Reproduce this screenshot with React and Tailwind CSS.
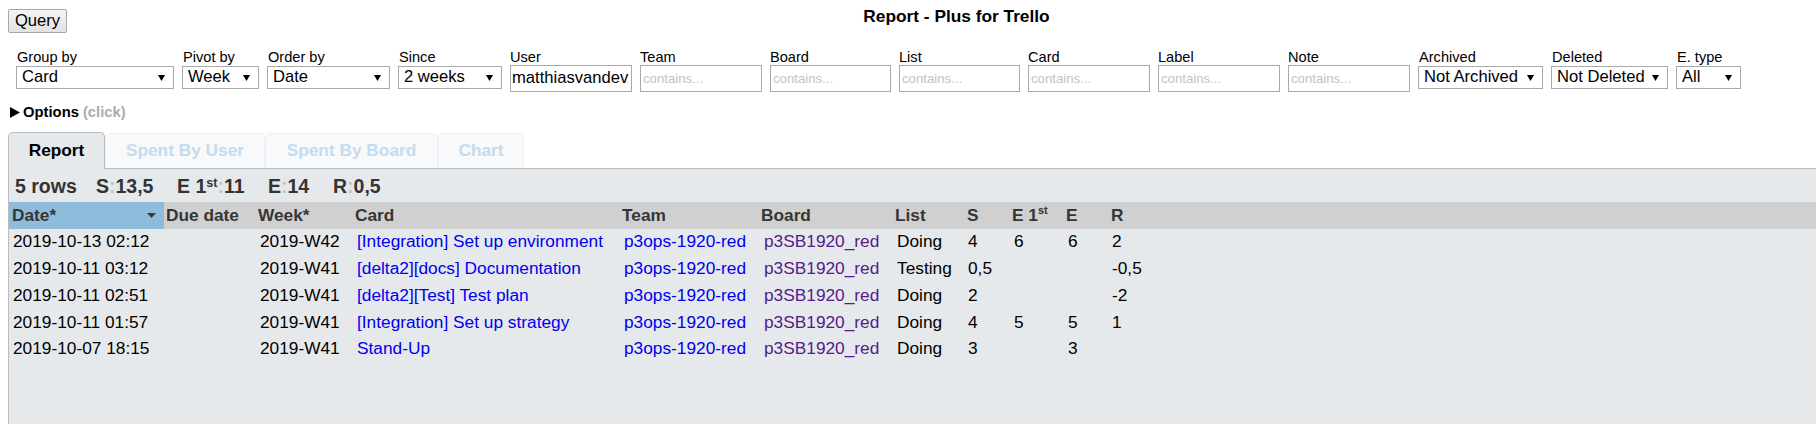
import React from "react";

const rows = [
  ["2019-10-13 02:12", "", "2019-W42", "[Integration] Set up environment", "p3ops-1920-red", "p3SB1920_red", "Doing", "4", "6", "6", "2"],
  ["2019-10-11 03:12", "", "2019-W41", "[delta2][docs] Documentation", "p3ops-1920-red", "p3SB1920_red", "Testing", "0,5", "", "", "-0,5"],
  ["2019-10-11 02:51", "", "2019-W41", "[delta2][Test] Test plan", "p3ops-1920-red", "p3SB1920_red", "Doing", "2", "", "", "-2"],
  ["2019-10-11 01:57", "", "2019-W41", "[Integration] Set up strategy", "p3ops-1920-red", "p3SB1920_red", "Doing", "4", "5", "5", "1"],
  ["2019-10-07 18:15", "", "2019-W41", "Stand-Up", "p3ops-1920-red", "p3SB1920_red", "Doing", "3", "", "3", ""],
];

function Arrow() {
  return (
    <svg width="7" height="6" viewBox="0 0 7 6">
      <polygon points="0,0 7,0 3.5,6" fill="#000" />
    </svg>
  );
}

function SelectField({ label, value, width }) {
  return (
    <div className="flex flex-col">
      <span className="text-[14.6px] leading-[17px] pl-[1px] whitespace-nowrap">{label}</span>
      <div className={`${width} h-[23px] border border-[#a9a9a9] bg-white flex items-center justify-between pl-[5px] pr-[8px] text-[16.6px] whitespace-nowrap`}>
        <span>{value}</span>
        <Arrow />
      </div>
    </div>
  );
}

function TextField({ label, value, width }) {
  return (
    <div className="flex flex-col">
      <span className="text-[14.6px] leading-[17px] whitespace-nowrap">{label}</span>
      <div className={`${width} -mt-[1px] h-[27px] border border-[#a9a9a9] bg-white flex items-center pl-[1px] overflow-hidden whitespace-nowrap`}>
        {value ? (
          <span className="text-[16.6px]">{value}</span>
        ) : (
          <span className="text-[13.2px] text-[#c3c3c3] pl-[1px]">contains...</span>
        )}
      </div>
    </div>
  );
}

function Colon() {
  return <span className="text-[#c2c2c2]">:</span>;
}

export default function App() {
  return (
    <div className="h-[424px] overflow-hidden flex flex-col bg-white text-black font-['Liberation_Sans',Arial,sans-serif]">
      {/* top bar */}
      <div className="flex items-start pt-[9px] pl-[8px]">
        <button className="w-[59px] h-[24px] border border-[#a6a6a6] rounded-[2px] bg-linear-to-b from-[#f5f5f5] to-[#e2e2e2] text-[16.6px] leading-none">
          Query
        </button>
        <div className="flex-1 pl-[30px] -mt-[3px] text-center font-bold text-[17.3px] leading-[20px]">
          Report - Plus for Trello
        </div>
      </div>

      {/* filters */}
      <div className="flex items-start gap-[8px] pl-[16px] mt-[16px]">
        <SelectField label="Group by" value="Card" width="w-[158px]" />
        <SelectField label="Pivot by" value="Week" width="w-[77px]" />
        <SelectField label="Order by" value="Date" width="w-[123px]" />
        <SelectField label="Since" value="2 weeks" width="w-[104px]" />
        <TextField label="User" value="matthiasvandev" width="w-[122px]" />
        <TextField label="Team" width="w-[122px]" />
        <TextField label="Board" width="w-[121px]" />
        <TextField label="List" width="w-[121px]" />
        <TextField label="Card" width="w-[122px]" />
        <TextField label="Label" width="w-[122px]" />
        <TextField label="Note" width="w-[122px]" />
        <SelectField label="Archived" value="Not Archived" width="w-[125px]" />
        <SelectField label="Deleted" value="Not Deleted" width="w-[117px]" />
        <SelectField label="E. type" value="All" width="w-[65px]" />
      </div>

      {/* options */}
      <div className="flex items-center mt-[12px] pl-[10px] h-[17px] font-bold text-[14.8px]">
        <svg width="10" height="11" viewBox="0 0 10 11" className="mr-[3px]">
          <polygon points="0,0 10,5.5 0,11" fill="#000" />
        </svg>
        <span>Options</span>
        <span className="ml-[4px] text-[#acacac]">(click)</span>
      </div>

      {/* tabs */}
      <div className="flex items-end mt-[11px] pl-[8px] h-[36px]">
        <div className="relative z-10 w-[97px] h-[37px] -mb-[1px] flex items-center justify-center rounded-t-[5px] border border-b-0 border-[#bcbcbc] bg-[#e6e9ec] font-bold text-[17.3px]">
          Report
        </div>
        <div className="w-[160px] h-[35px] flex items-center justify-center rounded-t-[5px] border border-b-0 border-[#edf1f5] bg-[#f7f9fb] font-bold text-[17.3px] text-[#c5dbee]">
          Spent By User
        </div>
        <div className="w-[173px] h-[35px] flex items-center justify-center rounded-t-[5px] border border-b-0 border-[#edf1f5] bg-[#f7f9fb] font-bold text-[17.3px] text-[#c5dbee]">
          Spent By Board
        </div>
        <div className="w-[86px] h-[35px] flex items-center justify-center rounded-t-[5px] border border-b-0 border-[#edf1f5] bg-[#f7f9fb] font-bold text-[17.3px] text-[#c5dbee]">
          Chart
        </div>
      </div>

      {/* report panel */}
      <div className="flex-1 ml-[8px] border-t border-l border-[#bcbcbc] bg-[#e6e9ec]">
        <div className="h-[33px] pt-[3px] pl-[6px] flex items-center font-bold text-[19.5px] text-[#333] whitespace-nowrap">
          <span className="w-[81px]">5 rows</span>
          <span className="w-[81px]">S<Colon />13,5</span>
          <span className="w-[91px]">E 1<sup className="text-[12.5px]">st</sup><Colon />11</span>
          <span className="w-[65px]">E<Colon />14</span>
          <span>R<Colon />0,5</span>
        </div>

        <table className="table-fixed border-collapse w-full text-[17.3px]">
          <colgroup>
            <col className="w-[155px]" />
            <col className="w-[92px]" />
            <col className="w-[97px]" />
            <col className="w-[267px]" />
            <col className="w-[139px]" />
            <col className="w-[134px]" />
            <col className="w-[72px]" />
            <col className="w-[45px]" />
            <col className="w-[54px]" />
            <col className="w-[45px]" />
            <col className="w-[60px]" />
            <col />
          </colgroup>
          <thead>
            <tr className="h-[27px] bg-[#d0d0d0] text-[#363636] font-bold text-left">
              <th className="bg-[#8fbcdb] pl-[3px] pr-[8px]">
                <div className="flex items-center justify-between">
                  <span>Date*</span>
                  <svg width="9" height="5" viewBox="0 0 9 5">
                    <polygon points="0,0 9,0 4.5,5" fill="#3a3a3a" />
                  </svg>
                </div>
              </th>
              <th className="pl-[2px] whitespace-nowrap">Due date</th>
              <th className="pl-[2px]">Week*</th>
              <th className="pl-[2px]">Card</th>
              <th className="pl-[2px]">Team</th>
              <th className="pl-[2px]">Board</th>
              <th className="pl-[2px]">List</th>
              <th className="pl-[2px]">S</th>
              <th className="pl-[2px] whitespace-nowrap">E 1<sup className="text-[11px] -top-[0.6em]">st</sup></th>
              <th className="pl-[2px]">E</th>
              <th className="pl-[2px]">R</th>
              <th></th>
            </tr>
          </thead>
          <tbody>
            {rows.map((r, i) => (
              <tr key={i} className="h-[26.75px] whitespace-nowrap">
                <td className="pl-[4px]">{r[0]}</td>
                <td className="pl-[4px]">{r[1]}</td>
                <td className="pl-[4px]">{r[2]}</td>
                <td className="pl-[4px] text-[#0000ee] overflow-hidden">{r[3]}</td>
                <td className="pl-[4px] text-[#0000ee]">{r[4]}</td>
                <td className="pl-[5px] text-[#551a8b]">{r[5]}</td>
                <td className="pl-[4px]">{r[6]}</td>
                <td className="pl-[3px]">{r[7]}</td>
                <td className="pl-[4px]">{r[8]}</td>
                <td className="pl-[4px]">{r[9]}</td>
                <td className="pl-[3px]">{r[10]}</td>
                <td></td>
              </tr>
            ))}
          </tbody>
        </table>
      </div>
    </div>
  );
}
